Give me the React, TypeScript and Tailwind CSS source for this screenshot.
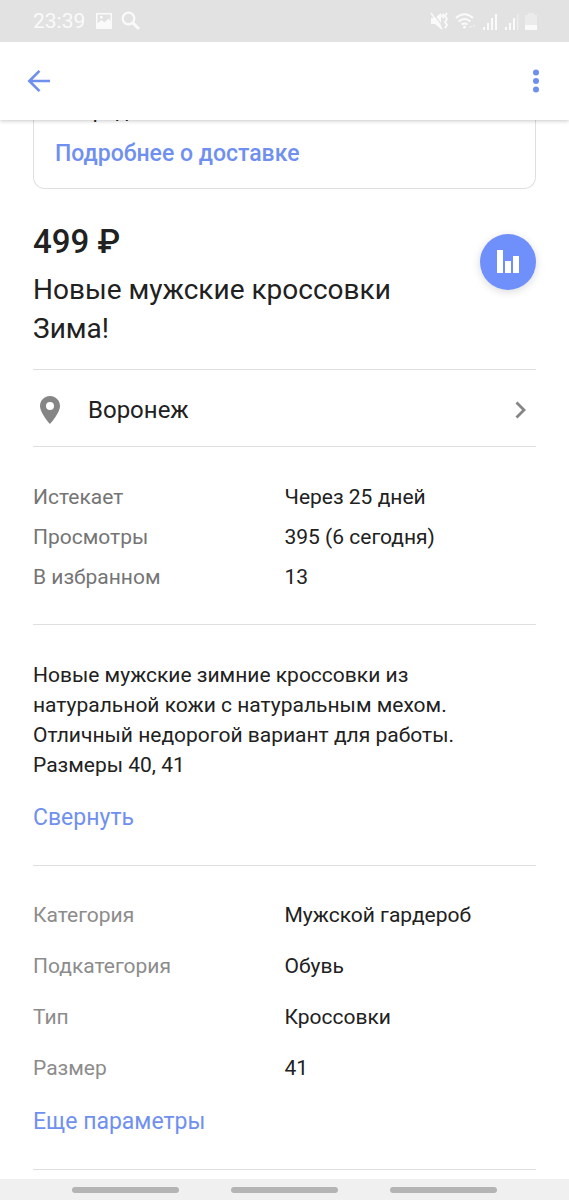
import React, { useState } from "react";

const stats = [
  { label: "Истекает", value: "Через 25 дней" },
  { label: "Просмотры", value: "395 (6 сегодня)" },
  { label: "В избранном", value: "13" },
];

const params = [
  { label: "Категория", value: "Мужской гардероб" },
  { label: "Подкатегория", value: "Обувь" },
  { label: "Тип", value: "Кроссовки" },
  { label: "Размер", value: "41" },
];

function StatusBar() {
  return (
    <div className="relative z-20 flex h-[42px] shrink-0 items-center justify-between bg-[#e2e2e2] pr-8 pl-[33px] text-[#fafafa]">
      <div className="flex items-center gap-2">
        <span className="text-[21px] leading-6">23:39</span>
        {/* Picture */}
        <svg width="20" height="16" viewBox="0 0 20 16">
          <path
            fill="currentColor"
            fillRule="evenodd"
            d="M3 0h16v16H3zM4.500 1.500v9l4-3.500 3 2.500 4-4 2 2.500V1.500zM7 3h2.500v2.500H7z"
          />
        </svg>
        {/* Search */}
        <svg width="20" height="20" viewBox="0 0 20 20" fill="none" stroke="currentColor">
          <circle cx="7.500" cy="7.500" r="5.800" strokeWidth="2.200" />
          <path d="M12 12l6 6" strokeWidth="3" />
        </svg>
      </div>
      <div className="flex items-center gap-[6px]">
        {/* Muted, vibrating */}
        <svg width="19" height="18" viewBox="0 0 19 18" fill="none" stroke="currentColor">
          <path d="M1 6h4l6-5v16l-6-5H1z" fill="currentColor" stroke="none" />
          <path d="M2.500 0l10.500 15" stroke="#e2e2e2" strokeWidth="1.200" />
          <path d="M1 1l11 16" strokeWidth="1.500" />
          <path d="M14 2l-2 2 2 2M17 1l-2 3 2 3-2 3 2 3-2 3" strokeWidth="1.800" />
        </svg>
        {/* Wi-Fi */}
        <svg width="21" height="17" viewBox="0 0 21 17" fill="none" stroke="currentColor" strokeWidth="2">
          <path d="M1 5q8.500-7.500 17 0M3.500 8.500q6-5 12 0M6.500 11.500q3-2.200 6 0" />
          <circle cx="9.500" cy="14" r="1.500" fill="currentColor" stroke="none" />
          <path d="M14 15l1.500-2 1.500 2M18 12l1.200 1.500 1-1.500" strokeWidth="1" opacity=".6" />
        </svg>
        <svg width="16" height="17" viewBox="0 0 16 17" fill="currentColor">
          <path d="M1 14h2v3H1zM5 10h2v7H5zM9 5h2v12H9zM13 1h2v16h-2z" />
        </svg>
        <svg width="15" height="17" viewBox="0 0 15 17" fill="currentColor">
          <path d="M1 14h2v3H1zM5 10h2v7H5zM9 5h2v12H9z" />
          <path d="M13 1h1.500v16H13z" opacity=".45" />
        </svg>
        {/* Battery */}
        <svg width="12" height="17" viewBox="0 0 12 17" fill="currentColor">
          <path d="M3 0h6v2h3v10H0V2h3z" opacity=".4" />
          <path d="M0 12h12v5H0z" />
        </svg>
      </div>
    </div>
  );
}

function Divider() {
  return <hr className="border-t border-[#e0e0e0]" />;
}

export default function App() {
  const [expanded, setExpanded] = useState(true);

  return (
    <div className="flex min-h-screen flex-col bg-white font-[Roboto,sans-serif] text-[#212121]">
      <StatusBar />

      {/* Toolbar */}
      <header className="relative z-10 flex h-[78px] shrink-0 items-center justify-between bg-white px-6 shadow-[0_1px_4px_rgba(0,0,0,0.22)]">
        <button type="button" aria-label="Назад" className="text-[#6f8fee]">
          <svg width="30" height="30" viewBox="0 0 30 30" fill="none" stroke="currentColor" strokeWidth="2.600">
            <path d="M26 15H6M15.500 4.800L5.300 15l10.200 10.200" />
          </svg>
        </button>
        <button type="button" aria-label="Меню" className="text-[#6f8fee]">
          <svg width="18" height="30" viewBox="0 0 18 30" fill="currentColor">
            <circle cx="9" cy="6.500" r="3" />
            <circle cx="9" cy="15" r="3" />
            <circle cx="9" cy="23.500" r="3" />
          </svg>
        </button>
      </header>

      <main className="flex-1 px-[33px]">
        {/* Delivery card, scrolled under the toolbar */}
        <section className="-mt-6 flex h-[93px] flex-col items-start rounded-b-xl border border-t-0 border-[#e0e0e0] px-[21px]">
          <p className="text-[21px] leading-[30px]">в города</p>
          <a href="#delivery" className="mt-2 text-[23px] leading-10 font-medium text-[#7090f0]">
            Подробнее о доставке
          </a>
        </section>

        <section className="flex items-start justify-between pt-[33px] pb-[21px]">
          <div>
            <p className="text-[33px] leading-10 font-medium">499 ₽</p>
            <h1 className="mt-2 max-w-[380px] text-[28px] leading-[39px]">
              Новые мужские кроссовки Зима!
            </h1>
          </div>
          <button
            type="button"
            aria-label="Статистика"
            className="mt-3 flex size-14 shrink-0 items-center justify-center rounded-full bg-[#6f90fb] shadow-[0_2px_8px_rgba(0,0,0,0.15)]"
          >
            <svg width="24" height="24" viewBox="0 0 24 24" fill="#fff">
              <path d="M1 0h6v23H1zM9 11h6v12H9zM17 6h6v17h-6z" />
            </svg>
          </button>
        </section>

        <Divider />
        <a href="#location" className="flex h-[76px] items-center pt-[3px] text-[24px]">
          <svg width="33" height="30" viewBox="0 0 33 30" fill="#858585">
            <path
              fillRule="evenodd"
              d="M17 1C11.500 1 7 5.400 7 11c0 7 10 18 10 18s10-11 10-18C27 5.400 22.500 1 17 1zm0 6a4 4 0 110 8 4 4 0 010-8z"
            />
          </svg>
          <span className="ml-[22px] flex-1">Воронеж</span>
          <svg width="32" height="20" viewBox="0 0 32 20" fill="none" stroke="#858585" strokeWidth="2.800">
            <path d="M12.500 2.500L20 10l-7.500 7.500" />
          </svg>
        </a>
        <Divider />

        <dl className="pt-[30px] pb-[27px] text-[21px] leading-10">
          {stats.map((item) => (
            <div key={item.label} className="grid grid-cols-2">
              <dt className="text-[#757575]">{item.label}</dt>
              <dd>{item.value}</dd>
            </div>
          ))}
        </dl>
        <Divider />

        <section className="pt-[35px] pb-[27px]">
          <p className={expanded ? "max-w-[450px] text-[21px] leading-[30px]" : "max-w-[450px] truncate text-[21px] leading-[30px]"}>
            Новые мужские зимние кроссовки из натуральной кожи с натуральным мехом. Отличный недорогой вариант для работы. Размеры 40, 41
          </p>
          <button
            type="button"
            onClick={() => setExpanded(!expanded)}
            className="mt-[18px] block text-[23px] leading-10 text-[#7090f0]"
          >
            {expanded ? "Свернуть" : "Развернуть"}
          </button>
        </section>
        <Divider />

        <section className="pt-6 pb-[27px]">
          <dl className="text-[21px] leading-[51px]">
            {params.map((item) => (
              <div key={item.label} className="grid grid-cols-2">
                <dt className="text-[#8c8c8c]">{item.label}</dt>
                <dd>{item.value}</dd>
              </div>
            ))}
          </dl>
          <button type="button" className="mt-2 block text-[23px] leading-10 text-[#7090f0]">
            Еще параметры
          </button>
        </section>
        <Divider />
      </main>

      {/* System navigation */}
      <div className="flex h-[21px] shrink-0 items-center justify-between bg-[#f0f0f0] px-[72px]">
        <span className="h-[6px] w-[107px] rounded-full bg-[#b4b4b4]" />
        <span className="h-[6px] w-[107px] rounded-full bg-[#b4b4b4]" />
        <span className="h-[6px] w-[107px] rounded-full bg-[#b4b4b4]" />
      </div>
    </div>
  );
}
